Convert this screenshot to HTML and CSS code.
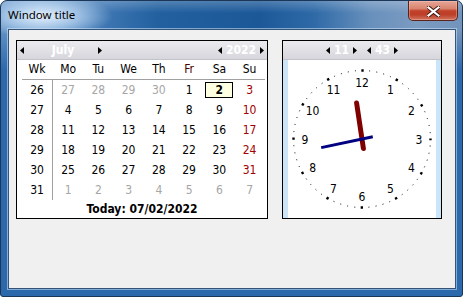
FILE: index.html
```html
<!DOCTYPE html>
<html>
<head>
<meta charset="utf-8">
<link rel="stylesheet" href="styles.css">
</head>
<body>
<div class="window">
  <div class="titlebar">
    <span class="title">Window title</span>
    <div class="close">
      <svg width="13" height="11" viewBox="0 0 13 11">
        <path d="M1.5 1.5 L11.5 9.5 M11.5 1.5 L1.5 9.5" stroke="#3a1410" stroke-width="4" stroke-linecap="square" fill="none"/>
        <path d="M1.5 1.5 L11.5 9.5 M11.5 1.5 L1.5 9.5" stroke="#fff" stroke-width="2.2" stroke-linecap="square" fill="none"/>
      </svg>
    </div>
  </div>
  <div class="client">
    <div class="calendar">
      <div class="cal-head">
        <div class="spin">
          <svg class="arr" width="4" height="7" viewBox="0 0 4 7"><polygon points="4,0 0,3.5 4,7"/></svg>
          <span class="spin-val month">July</span>
          <svg class="arr" width="4" height="7" viewBox="0 0 4 7"><polygon points="0,0 4,3.5 0,7"/></svg>
        </div>
        <div class="spin">
          <svg class="arr" width="4" height="7" viewBox="0 0 4 7"><polygon points="4,0 0,3.5 4,7"/></svg>
          <span class="spin-val year">2022</span>
          <svg class="arr" width="4" height="7" viewBox="0 0 4 7"><polygon points="0,0 4,3.5 0,7"/></svg>
        </div>
      </div>
      <div class="cal-body">
        <div class="cal-grid">
          <div class="hd wk">Wk</div><div class="hd">Mo</div><div class="hd">Tu</div><div class="hd">We</div><div class="hd">Th</div><div class="hd fri">Fr</div><div class="hd">Sa</div><div class="hd">Su</div>
          <div class="rule"></div>

          <div class="wk">26</div><div class="off">27</div><div class="off">28</div><div class="off">29</div><div class="off">30</div><div>1</div><div><span class="sel">2</span></div><div class="sun">3</div>
          <div class="wk">27</div><div>4</div><div>5</div><div>6</div><div>7</div><div>8</div><div>9</div><div class="sun">10</div>
          <div class="wk">28</div><div>11</div><div>12</div><div>13</div><div>14</div><div>15</div><div>16</div><div class="sun">17</div>
          <div class="wk">29</div><div>18</div><div>19</div><div>20</div><div>21</div><div>22</div><div>23</div><div class="sun">24</div>
          <div class="wk">30</div><div>25</div><div>26</div><div>27</div><div>28</div><div>29</div><div>30</div><div class="sun">31</div>
          <div class="wk">31</div><div class="off">1</div><div class="off">2</div><div class="off">3</div><div class="off">4</div><div class="off">5</div><div class="off">6</div><div class="off">7</div>
        </div>
        <div class="today">Today: 07/02/2022</div>
      </div>
    </div>

    <div class="clock">
      <div class="clock-head">
        <div class="spin">
          <svg class="arr" width="4" height="7" viewBox="0 0 4 7"><polygon points="4,0 0,3.5 4,7"/></svg>
          <span class="spin-val small">11</span>
          <svg class="arr" width="4" height="7" viewBox="0 0 4 7"><polygon points="0,0 4,3.5 0,7"/></svg>
        </div>
        <div class="spin">
          <svg class="arr" width="4" height="7" viewBox="0 0 4 7"><polygon points="4,0 0,3.5 4,7"/></svg>
          <span class="spin-val small">43</span>
          <svg class="arr" width="4" height="7" viewBox="0 0 4 7"><polygon points="0,0 4,3.5 0,7"/></svg>
        </div>
      </div>
      <div class="clock-body">
        <svg class="face" width="158" height="158" viewBox="0 0 158 158">
          <circle cx="79" cy="79" r="68.5" fill="none" stroke="#000" stroke-width="1" stroke-dasharray="1 6.1735" stroke-dashoffset="0.5"/>
          <circle cx="79" cy="79" r="68.5" fill="none" stroke="#000" stroke-width="2.4" stroke-dasharray="2.4 33.468" stroke-dashoffset="1.2"/>
          <g class="nums">
            <text x="107.5" y="30">1</text>
            <text x="128.4" y="51">2</text>
            <text x="136" y="79.5">3</text>
            <text x="128.4" y="108">4</text>
            <text x="107.5" y="129">5</text>
            <text x="79" y="136.5">6</text>
            <text x="50.5" y="129">7</text>
            <text x="29.6" y="108">8</text>
            <text x="22" y="79.5">9</text>
            <text x="29.6" y="51">10</text>
            <text x="50.5" y="30">11</text>
            <text x="79" y="22.5">12</text>
          </g>
          <line x1="80.4" y1="88.5" x2="73.6" y2="43" stroke="#800000" stroke-width="5" stroke-linecap="round"/>
          <line x1="89.8" y1="76.7" x2="38.2" y2="87.6" stroke="#000080" stroke-width="3"/>
        </svg>
      </div>
    </div>
  </div>
</div>
</body>
</html>
```

FILE: styles.css
```css
* { box-sizing: border-box; }

html, body {
  margin: 0;
  padding: 0;
  background: #ffffff;
}

body {
  width: 463px;
  height: 297px;
  overflow: hidden;
}

.window {
  width: 463px;
  height: 297px;
  border: 1px solid #1b3656;
  border-radius: 7px 7px 3px 3px;
  display: flex;
  flex-direction: column;
  background-color: #2b68ac;
  background-image:
    linear-gradient(to bottom, rgba(43,104,172,0) 0, rgba(43,104,172,0) 30px, #2b68ac 70px),
    radial-gradient(ellipse 70px 22px at 42px 15px, rgba(236,245,255,0.95) 0, rgba(200,224,248,0.6) 55%, rgba(160,195,230,0) 100%),
    linear-gradient(to bottom, rgba(255,255,255,0.22) 0, rgba(255,255,255,0) 12px),
    linear-gradient(to right, #5d8fc4 0%, #6b9bcd 8%, #3f77b3 22%, #22609f 34%, #1c5898 56%, #2f6aa7 68%, #6890bc 80%, #7b9bc1 90%, #7293bb 100%);
  overflow: hidden;
}

.titlebar {
  height: 28px;
  flex: none;
  display: flex;
  justify-content: space-between;
  align-items: flex-start;
}

.title {
  font-family: "Noto Sans", "Open Sans", sans-serif;
  font-size: 11.5px;
  line-height: 28px;
  padding-left: 7px;
  color: #000;
}

.close {
  width: 50px;
  height: 21px;
  margin-top: -1px;
  margin-right: 4px;
  border: 1px solid #5b241b;
  border-top-color: #7a3a30;
  border-radius: 0 0 5px 5px;
  background: linear-gradient(to bottom, #e7a797 0%, #d8846f 40%, #c2412a 52%, #bd3f28 72%, #d27560 100%);
  box-shadow: inset 0 0 0 1px rgba(255,210,200,0.35);
  display: flex;
  align-items: center;
  justify-content: center;
}

.close svg { display: block; margin-top: 1px; }

.client {
  flex: 1;
  margin: 0 6px 7px 7px;
  border: 1px solid #34557a;
  box-shadow: 0 0 0 1px rgba(210,230,250,0.55);
  background: #f0f0f0;
  display: flex;
  align-items: flex-start;
  gap: 14px;
  padding: 10px 0 0 7px;
  font-family: "DejaVu Sans Condensed", "DejaVu Sans", sans-serif;
  font-size: 12px;
  color: #000;
}

.calendar {
  width: 252px;
  height: 179px;
  border: 1px solid #000;
  background: #fff;
  display: flex;
  flex-direction: column;
}

.cal-head, .clock-head {
  height: 19px;
  flex: none;
  border-bottom: 1px solid #c3c3cb;
  background: linear-gradient(to bottom, #ebebef 0%, #d6d6dc 100%);
  display: flex;
  align-items: center;
}

.cal-head {
  justify-content: space-between;
  padding: 0 3px 0 3px;
}

.clock-head {
  justify-content: center;
  gap: 10px;
}

.spin {
  display: flex;
  align-items: center;
}

.arr { display: block; fill: #000; }

.spin-val {
  color: #fff;
  font-weight: bold;
  text-align: center;
  line-height: 18px;
}

.spin-val.month { width: 74px; padding-left: 4px; }
.spin-val.year { width: 38px; }
.spin-val.small { width: 23px; }

.cal-body {
  flex: 1;
  display: flex;
  flex-direction: column;
}

.cal-grid {
  display: grid;
  grid-template-columns: 31px repeat(7, 30.25px);
  grid-template-rows: 19px 1px repeat(6, 20px);
  margin-left: 5px;
  text-align: center;
  line-height: 20px;
}

.cal-grid .hd { line-height: 19px; }

.cal-grid .wk { border-right: 1px solid #a0a0a0; }

.cal-grid .hd.wk { border-right-color: transparent; background: linear-gradient(to right, transparent 30px, #a0a0a0 30px) no-repeat right 4px / 100% 15px; }

.fri { color: #4a0000; }

.rule {
  grid-column: 1 / -1;
  background: #a0a0a0;
}

.off { color: #a6a6a6; }
.sun { color: #a00000; }

.sel {
  display: inline-block;
  width: 28px;
  height: 16px;
  line-height: 14px;
  border: 1px solid #000;
  background: #ffffe1;
  font-weight: bold;
  vertical-align: middle;
  margin-top: -2px;
}

.today {
  height: 18px;
  line-height: 18px;
  text-align: center;
  font-weight: bold;
}

.clock {
  width: 160px;
  height: 179px;
  border: 1px solid #000;
  background: #fff;
  display: flex;
  flex-direction: column;
}

.clock-body {
  height: 158px;
  background: linear-gradient(to right, #cce4f7 0, #cce4f7 5px, #fff 5px, #fff 153px, #cce4f7 153px);
}

.face { display: block; }

.nums text {
  font-family: "DejaVu Sans Condensed", "DejaVu Sans", sans-serif;
  font-size: 12px;
  text-anchor: middle;
  dominant-baseline: central;
  fill: #000;
}
```
